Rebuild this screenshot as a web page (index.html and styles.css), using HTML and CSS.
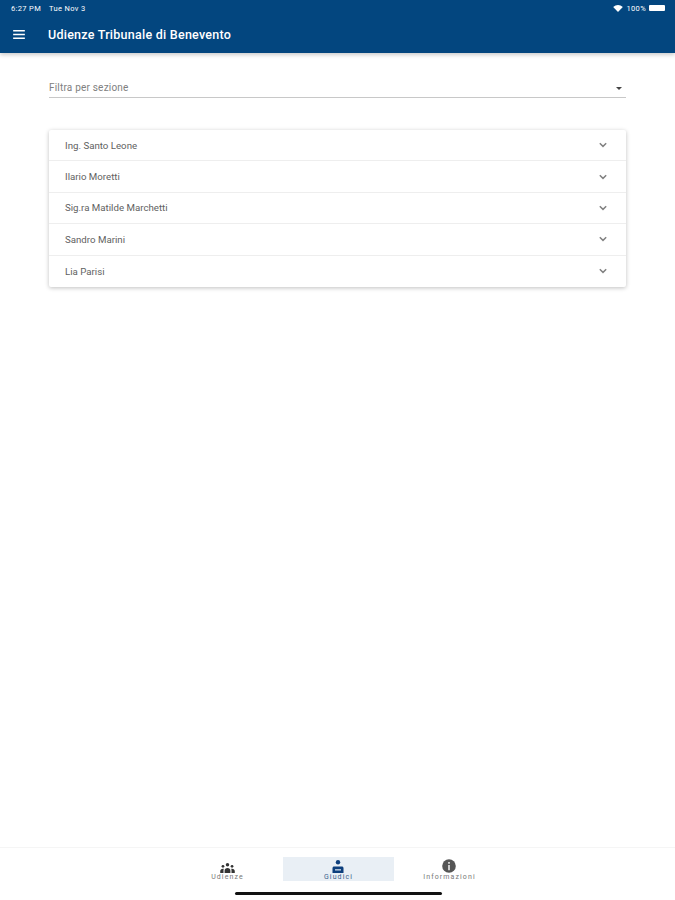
FILE: index.html
```html
<!DOCTYPE html>
<html lang="it">
<head>
  <meta charset="UTF-8" />
  <meta name="viewport" content="width=device-width, initial-scale=1.0"/>
  <title>Udienze Tribunale di Benevento</title>
  <link rel="stylesheet" href="styles.css">
</head>
<body>

<header class="app-header">
  <div class="status-bar">
    <div class="status-left">
      <span>6:27 PM</span>
      <span>Tue Nov 3</span>
    </div>
    <div class="status-right">
      <svg class="wifi" width="10" height="7" viewBox="0 0 11 8"><path d="M5.500 8 0 2.400C3.200-.8 7.800-.8 11 2.400z" fill="#fff"/></svg>
      <span>100%</span>
      <div class="battery"></div>
    </div>
  </div>
  <div class="toolbar">
    <svg class="menu-icon" width="12" height="9" viewBox="0 0 13 10"><path d="M0 0h13v1.600H0zM0 4.200h13v1.600H0zM0 8.400h13V10H0z" fill="#fff"/></svg>
    <h1>Udienze Tribunale di Benevento</h1>
  </div>
</header>

<main class="content">
  <div class="section-filter">
    <span>Filtra per sezione</span>
    <div class="select-arrow"></div>
  </div>

  <div class="panel-list">
    <div class="panel-row">
      <span>Ing. Santo Leone</span>
      <svg class="chevron" width="8" height="6" viewBox="0 0 10 7"><path d="M1 1.200 5 5.200 9 1.200" fill="none" stroke="#808080" stroke-width="1.800"/></svg>
    </div>
    <div class="panel-row">
      <span>Ilario Moretti</span>
      <svg class="chevron" width="8" height="6" viewBox="0 0 10 7"><path d="M1 1.200 5 5.200 9 1.200" fill="none" stroke="#808080" stroke-width="1.800"/></svg>
    </div>
    <div class="panel-row">
      <span>Sig.ra Matilde Marchetti</span>
      <svg class="chevron" width="8" height="6" viewBox="0 0 10 7"><path d="M1 1.200 5 5.200 9 1.200" fill="none" stroke="#808080" stroke-width="1.800"/></svg>
    </div>
    <div class="panel-row">
      <span>Sandro Marini</span>
      <svg class="chevron" width="8" height="6" viewBox="0 0 10 7"><path d="M1 1.200 5 5.200 9 1.200" fill="none" stroke="#808080" stroke-width="1.800"/></svg>
    </div>
    <div class="panel-row">
      <span>Lia Parisi</span>
      <svg class="chevron" width="8" height="6" viewBox="0 0 10 7"><path d="M1 1.200 5 5.200 9 1.200" fill="none" stroke="#808080" stroke-width="1.800"/></svg>
    </div>
  </div>
</main>

<footer class="bottom-nav">
  <div class="nav-tabs">
    <div class="nav-item">
      <svg width="15" height="10" viewBox="0 0 16 11"><g fill="#333"><circle cx="8" cy="2" r="1.900"/><circle cx="3" cy="3.600" r="1.500"/><circle cx="13" cy="3.600" r="1.500"/><path d="M4.800 11V8.400C4.800 6.600 6.200 5.400 8 5.400s3.200 1.200 3.200 3V11zM0 11V8.800C0 7.200 1.200 6.200 3 6.200c.4 0 .7 0 1 .1-.3.600-.4 1.300-.4 2V11zM16 11V8.800C16 7.200 14.800 6.200 13 6.200c-.4 0-.7 0-1 .1.300.600.400 1.300.400 2V11z"/></g></svg>
      <span>Udienze</span>
    </div>
    <div class="nav-item active">
      <svg width="12" height="13" viewBox="0 0 12 13"><g fill="#0d3f7d"><circle cx="6" cy="2.200" r="2.200"/><path d="M.5 13V8c0-.9.700-1.600 1.700-1.600h7.600c1 0 1.700.7 1.700 1.600v5z"/></g><path d="M3 9.200h6v1.300H3z" fill="#cfdbe8"/></svg>
      <span>Giudici</span>
    </div>
    <div class="nav-item">
      <svg width="14" height="14" viewBox="0 0 14 14"><circle cx="7" cy="7" r="6.800" fill="#555"/><path d="M6 3h2v1.800H6zM6 6h2v5.200H6z" fill="#ccc"/></svg>
      <span>Informazioni</span>
    </div>
  </div>
  <div class="home-indicator"></div>
</footer>

</body>
</html>
```

FILE: styles.css
```css
:root {
  --primary: #03467f;
  --text: #616161;
  --line: #eeeeee;
}
* {
  margin: 0;
  padding: 0;
  box-sizing: border-box;
  font-family: 'Roboto', sans-serif;
}
html, body {
  height: 900px;
  overflow: hidden;
}
body {
  display: flex;
  flex-direction: column;
  background: #fff;
  color: var(--text);
}
.app-header {
  height: 53px;
  background: var(--primary);
  color: #fff;
  box-shadow: 0 2px 4px rgba(0, 0, 0, 0.2);
}
.status-bar {
  height: 16px;
  padding: 0 10px 0 11px;
  display: flex;
  justify-content: space-between;
  align-items: center;
  font-size: 7.5px;
  letter-spacing: 0.35px;
}
.status-left {
  display: flex;
  gap: 8px;
}
.status-right {
  display: flex;
  align-items: center;
  gap: 3px;
}
.battery {
  width: 16px;
  height: 6px;
  background: #fff;
  border-radius: 1px;
}
.toolbar {
  height: 37px;
  padding-left: 13px;
  display: flex;
  align-items: center;
}
.toolbar h1 {
  margin-left: 23px;
  font-size: 12.5px;
  font-weight: 500;
  letter-spacing: 0.25px;
}
.content {
  flex: 1;
  padding: 0 49px;
}
.section-filter {
  height: 45px;
  margin-bottom: 32px;
  padding: 29px 4px 0 0;
  display: flex;
  justify-content: space-between;
  font-size: 10px;
  letter-spacing: 0.2px;
  color: #808080;
  border-bottom: 1px solid #c8c8c8;
}
.select-arrow {
  margin-top: 5px;
  width: 0;
  height: 0;
  border-left: 3px solid transparent;
  border-right: 3px solid transparent;
  border-top: 3px solid #444;
}
.panel-list {
  border-radius: 2px;
  box-shadow: 0 1px 4px rgba(0, 0, 0, 0.25);
}
.panel-row {
  height: 31.4px;
  padding: 0 19px 0 16px;
  display: flex;
  justify-content: space-between;
  align-items: center;
  font-size: 9.7px;
  border-bottom: 1px solid var(--line);
}
.panel-row:last-child {
  border-bottom: none;
}
.bottom-nav {
  height: 53px;
  padding-left: 2px;
  display: flex;
  flex-direction: column;
  align-items: center;
  border-top: 1px solid #f5f5f5;
}
.nav-tabs {
  display: flex;
  margin-top: 9px;
}
.nav-item {
  width: 111px;
  height: 24px;
  display: flex;
  flex-direction: column;
  align-items: center;
  justify-content: flex-end;
  font-size: 7px;
  letter-spacing: 1.1px;
  color: #777;
}
.nav-item svg {
  flex: none;
  margin-right: 1px;
}
.nav-item.active {
  background: #e9eff5;
  color: #3c5f8c;
}
.home-indicator {
  width: 207px;
  height: 3px;
  margin-top: 11px;
  background: #111;
  border-radius: 2px;
}
```
